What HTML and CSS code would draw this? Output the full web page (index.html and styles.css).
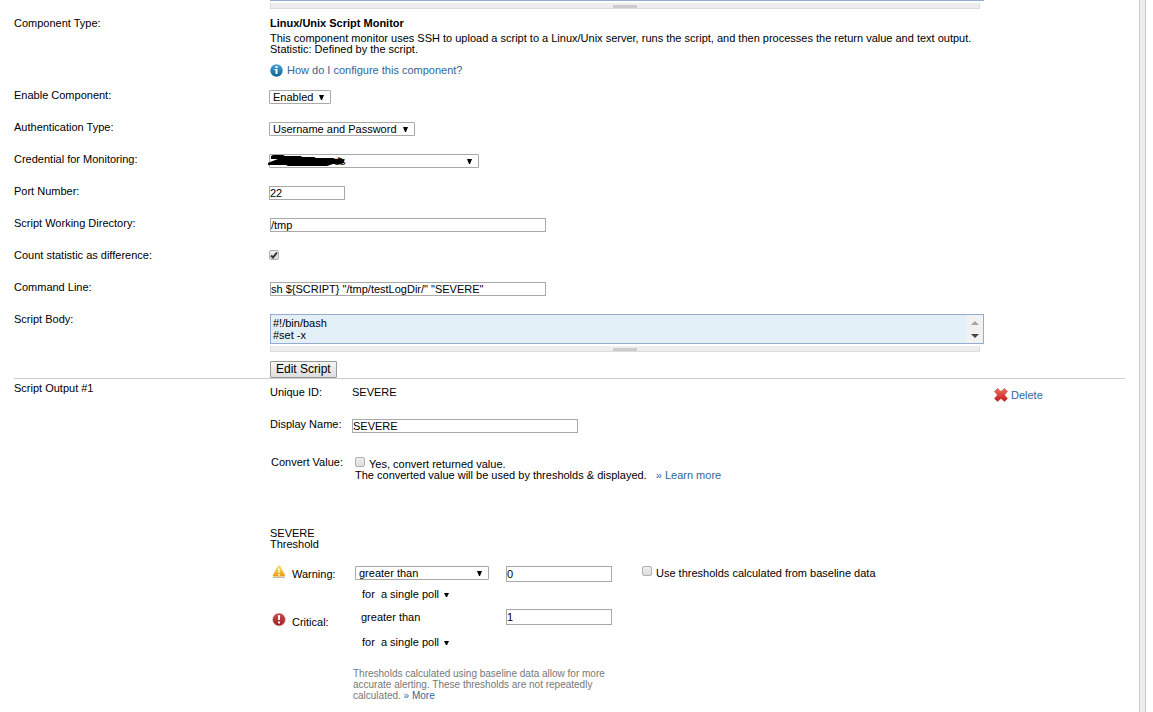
FILE: index.html
```html
<!DOCTYPE html>
<html lang="en">
<head>
<meta charset="utf-8">
<title>Linux/Unix Script Monitor</title>
<link rel="stylesheet" href="styles.css">
</head>
<body>
<div class="page">
<main class="content">
  <div class="prev-edge"></div>
  <div class="resizer resizer-top"><span class="grip"></span></div>

  <section class="rows">
    <div class="row intro">
      <div class="label">Component Type:</div>
      <div class="about">
        <h1>Linux/Unix Script Monitor</h1>
        <p>This component monitor uses SSH to upload a script to a Linux/Unix server, runs the script, and then processes the return value and text output.<br>Statistic: Defined by the script.</p>
        <a class="help" href="#help">
          <svg width="13" height="13" viewBox="0 0 13 13" aria-hidden="true"><defs><linearGradient id="ib" x2="0" y2="1"><stop stop-color="#4aa5d3"/><stop offset="1" stop-color="#096392"/></linearGradient></defs><circle cx="6.500" cy="6.500" r="6.200" fill="url(#ib)"/><path d="M5.500 2h2v2h-2zM4.500 5h3v5h-2V6h-1z" fill="#fff"/></svg>
          <span>How do I configure this component?</span>
        </a>
      </div>
    </div>
    <div class="row">
      <label class="label" for="enable">Enable Component:</label>
      <div class="field outset"><span class="select w-enable"><select id="enable"><option>Enabled</option></select><svg class="arrow" width="5" height="5"><path d="M0 0h5L3 5H2z"/></svg></span></div>
    </div>
    <div class="row">
      <label class="label" for="auth">Authentication Type:</label>
      <div class="field outset"><span class="select w-auth"><select id="auth"><option>Username and Password</option></select><svg class="arrow" width="5" height="5"><path d="M0 0h5L3 5H2z"/></svg></span></div>
    </div>
    <div class="row">
      <label class="label" for="cred">Credential for Monitoring:</label>
      <div class="field outset"><span class="select w-cred"><select id="cred" class="masked"><option>ds</option></select><svg class="arrow" width="5" height="5"><path d="M0 0h5L3 5H2z"/></svg>
        <svg class="scribble" width="78" height="12" viewBox="0 0 78 12" aria-hidden="true"><path d="M3 1L5 0H15L17 1H33L34 2L46 2L48 3L65 3L68 4L73 3L76 5L76 8L73 9L65 9L62 10L59 11L20 11L18 10L7 10L0 10L0 8L2 7L10 4L3 4z"/></svg></span></div>
    </div>
    <div class="row">
      <label class="label" for="port">Port Number:</label>
      <div class="field outset"><input class="text w-port" id="port" type="text" value="22"></div>
    </div>
    <div class="row">
      <label class="label" for="dir">Script Working Directory:</label>
      <div class="field"><input class="text w-line" id="dir" type="text" value="/tmp"></div>
    </div>
    <div class="row">
      <label class="label" for="diff">Count statistic as difference:</label>
      <div class="field outset"><span class="check"><input id="diff" type="checkbox" checked><svg class="tick" width="10" height="10" viewBox="0 0 10 10"><path d="M2 5.500L4 7.500L8 2.500" fill="none" stroke="#333" stroke-width="2"/></svg></span></div>
    </div>
    <div class="row">
      <label class="label" for="cmd">Command Line:</label>
      <div class="field"><input class="text w-line" id="cmd" type="text" value="sh ${SCRIPT} &quot;/tmp/testLogDir/&quot; &quot;SEVERE&quot;"></div>
    </div>
    <div class="row">
      <label class="label" for="body">Script Body:</label>
      <div class="field script">
        <div class="script-box">
          <textarea id="body" rows="2" readonly>#!/bin/bash
#set -x</textarea>
          <div class="scroll"><svg width="8" height="4"><path d="M0 4L4 0L8 4z" fill="#a3a3a3"/></svg><svg width="8" height="4"><path d="M0 0h8L4 4z" fill="#444"/></svg></div>
        </div>
        <div class="resizer"><span class="grip"></span></div>
        <button class="edit" type="button">Edit Script</button>
      </div>
    </div>
  </section>

  <section class="output">
    <div class="label out-label">Script Output #1</div>
    <div class="details">
      <div class="pair"><span>Unique ID:</span><span>SEVERE</span></div>
      <div class="pair name"><label for="name">Display Name:</label><input class="text w-name" id="name" type="text" value="SEVERE"></div>
      <div class="pair convert">
        <span>Convert Value:</span>
        <div>
          <div class="yes"><span class="check"><input id="conv" type="checkbox"></span><label for="conv">Yes, convert returned value.</label></div>
          <div class="note">The converted value will be used by thresholds &amp; displayed. <a class="learn" href="#learn">» Learn more</a></div>
        </div>
      </div>

      <div class="heading">SEVERE<br>Threshold</div>
      <div class="thresholds">
        <div class="state">
          <svg width="16" height="15" viewBox="0 0 16 15" aria-hidden="true"><defs><linearGradient id="wg" x2="0" y2="1"><stop stop-color="#ffe477"/><stop offset="1" stop-color="#e99b08"/></linearGradient></defs><path d="M2 13.500h12" stroke="#bbb" stroke-width="1"/><path d="M7 1.500Q8 .5 9 1.500L14 11Q14 12.500 13 12.500H3Q1 12.500 2 11z" fill="url(#wg)"/><path d="M7.200 4.500h1.600L8.500 9h-1zM7.200 10h1.600v1.600H7.200z" fill="#fff"/></svg>
          <label for="warn">Warning:</label>
        </div>
        <span class="select w-op"><select id="warn"><option>greater than</option></select><svg class="arrow" width="5" height="5"><path d="M0 0h5L3 5H2z"/></svg></span>
        <input class="text tall" type="text" value="0" aria-label="Warning value">
        <div class="baseline"><span class="check"><input id="base" type="checkbox"></span><label for="base">Use thresholds calculated from baseline data</label></div>
        <div class="poll">for&nbsp; a single poll <svg width="5" height="4"><path d="M0 0h5L3 4H2z"/></svg></div>

        <div class="state critical">
          <svg width="16" height="15" viewBox="0 0 16 15" aria-hidden="true"><defs><linearGradient id="cg" x2="0" y2="1"><stop stop-color="#ce4d4f"/><stop offset="1" stop-color="#a31c21"/></linearGradient></defs><circle cx="8" cy="7.500" r="6.500" fill="url(#cg)" stroke="#ddd" stroke-width=".6"/><path d="M7 3h2v5H7zM7 9.500h2v2H7z" fill="#fff"/></svg>
          <span>Critical:</span>
        </div>
        <div class="op">greater than</div>
        <input class="text tall" type="text" value="1" aria-label="Critical value">
        <div class="poll">for&nbsp; a single poll <svg width="5" height="4"><path d="M0 0h5L3 4H2z"/></svg></div>
      </div>
      <p class="hint">Thresholds calculated using baseline data allow for more accurate alerting. These thresholds are not repeatedly<br>calculated. <a href="#more">» More</a></p>
    </div>
    <a class="delete" href="#delete">
      <svg width="14" height="14" viewBox="0 0 14 14" aria-hidden="true"><defs><linearGradient id="dg" x2="0" y2="1"><stop stop-color="#f0705f"/><stop offset="1" stop-color="#c9151b"/></linearGradient></defs><path d="M3.500 .5L7 3.500L10.500 .5L13.500 3.500L10.500 7L13.500 10.500L10.500 13.500L7 10.500L3.500 13.500L.5 10.500L3.500 7L.5 3.500z" fill="url(#dg)" stroke="#a34f49" stroke-width=".6" stroke-linejoin="round"/></svg>
      <span>Delete</span>
    </a>
  </section>
</main>
<div class="gutter"></div>
</div>
</body>
</html>
```

FILE: styles.css
```css
* { box-sizing: border-box; }
body {
  margin: 0;
  background: #fff;
  color: #000;
  font: 11px/11px "Liberation Sans", Arial, sans-serif;
}
h1, p { margin: 0; }
a { color: #336699; text-decoration: none; }
svg { display: block; flex: none; }
input, select, textarea, button { margin: 0; color: #000; font: inherit; }

.page { display: flex; min-height: 100vh; }
.content { flex: 1; min-width: 0; padding: 0 14px; }
.gutter {
  width: 7px;
  margin-right: 7px;
  background: #eee;
  border: solid #ccc;
  border-width: 0 1px;
}

.prev-edge { width: 714px; height: 1px; margin-left: 256px; background: #95acd0; }
.resizer {
  display: flex;
  justify-content: center;
  align-items: flex-end;
  width: 710px;
  height: 6px;
  background: #eee;
  border: solid #ddd;
  border-width: 0 1px 1px;
}
.resizer-top { margin: 2px 0 0 256px; }
.grip { width: 24px; height: 3px; background: #ccc; }

.row { display: grid; grid-template-columns: 256px 1fr; min-height: 32px; }
.label { line-height: 16px; }
.field { padding-top: 3px; }
.outset { margin-left: -1px; }

.intro { min-height: 78px; padding-top: 6px; }
.about h1 { font-size: 11px; line-height: 16px; }
.about p { padding-top: 2px; }
.help { display: inline-flex; align-items: center; gap: 4px; margin-top: 9px; }

.select { position: relative; display: grid; align-items: center; height: 14px; }
.select select {
  grid-area: 1 / 1;
  width: 100%;
  height: 14px;
  padding: 0 3px;
  border: 1px solid #a9a9a9;
  border-radius: 1px;
  background: #fff;
  appearance: none;
  line-height: 12px;
}
.select .masked { padding-left: 64px; }
.arrow { grid-area: 1 / 1; justify-self: end; margin-right: 7px; pointer-events: none; }
.scribble { position: absolute; left: -1px; top: 1px; pointer-events: none; }

.text {
  display: block;
  height: 14px;
  padding: 0;
  border: 1px solid #a9a9a9;
  border-radius: 0;
  background: #fff;
  line-height: 12px;
}
.tall { width: 106px; height: 16px; }
.w-enable { width: 62px; }
.w-auth { width: 146px; }
.w-cred { width: 210px; }
.w-port { width: 76px; }
.w-line { width: 276px; }
.w-name { width: 226px; }
.w-op { width: 134px; }

.check { display: grid; width: 10px; height: 10px; }
.check input {
  grid-area: 1 / 1;
  width: 10px;
  height: 10px;
  border: 1px solid #b0b0b0;
  border-radius: 2px;
  background: linear-gradient(#eee, #ddd);
  appearance: none;
}
.tick { grid-area: 1 / 1; z-index: 1; pointer-events: none; }

.script-box { display: flex; width: 714px; height: 30px; border: 1px solid #95acd0; background: #e3f0f8; }
.script-box textarea {
  flex: 1;
  padding: 2px;
  border: 0;
  background: transparent;
  line-height: 12px;
  overflow: hidden;
  resize: none;
}
.scroll {
  display: flex;
  flex-direction: column;
  justify-content: space-between;
  align-items: center;
  width: 17px;
  padding: 6px 0 5px;
  background: #f1f1f1;
}
.script .resizer { margin-top: 2px; }
.edit {
  display: block;
  height: 17px;
  margin-top: 9px;
  padding: 0 5px;
  border: 1px solid #999;
  border-radius: 1px;
  background: linear-gradient(#f5f5f5, #ddd);
  font-size: 12px;
  line-height: 15px;
}

.output {
  display: grid;
  grid-template-columns: 256px 724px 1fr;
  align-items: start;
  border-top: 1px solid #ccc;
}
.out-label { padding-top: 1px; }
.details { padding-top: 5px; }
.pair { display: grid; grid-template-columns: 82px 1fr; line-height: 16px; }
.name { padding-top: 16px; }
.name .text { margin-top: 3px; }
.convert { grid-template-columns: 84px 1fr; padding: 21px 0 0 1px; }
.yes { display: flex; gap: 4px; padding-top: 3px; line-height: 12px; }
.yes label { padding-top: 1px; }
.note { line-height: 11px; }
.learn { margin-left: 6px; }
.heading { margin-top: 47px; }

.thresholds { display: grid; grid-template-columns: 85px 151px 136px 1fr; padding-top: 14px; align-items: start; }
.state { grid-row: span 2; display: flex; gap: 5px; padding-left: 1px; }
.state label, .state span { padding-top: 5px; }
.thresholds .w-op { margin-top: 2px; }
.thresholds .tall { margin-top: 2px; }
.baseline { display: flex; gap: 4px; padding-top: 2px; }
.baseline label { padding-top: 2px; }
.poll { grid-column: 2 / -1; display: flex; align-items: center; gap: 5px; padding: 7px 0 0 7px; }
.critical { padding-top: 12px; }
.op { padding: 12px 0 0 6px; }
.op + .tall { margin-top: 9px; }
.op ~ .poll { padding-top: 12px; }
.hint { width: 350px; max-width: 100%; padding: 20px 0 0 83px; color: #777; font-size: 10px; }
.delete { display: inline-flex; align-items: center; gap: 3px; padding-top: 9px; }
```
